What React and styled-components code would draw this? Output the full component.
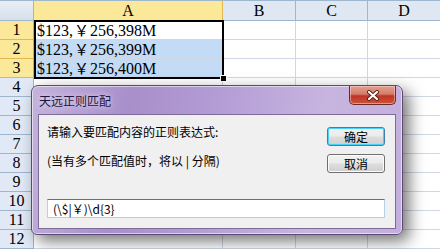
import React from 'react';
import styled, { createGlobalStyle } from 'styled-components';

const GlobalStyle = createGlobalStyle`
	html, body {
		margin: 0;
		padding: 0;
		background: #fff;
		overflow: hidden;
	}
`;

const Page = styled.div`
	position: relative;
	width: 440px;
	height: 249px;
	overflow: hidden;
	background: #fff;
`;

const Sheet = styled.div`
	display: grid;
	grid-template-columns: 34px 189px 73px 72px 73px;
	grid-template-rows: 21px repeat(12, 19px);
	font-family: 'Liberation Serif', 'Noto Sans CJK SC', serif;
`;

const Corner = styled.div`
	background: linear-gradient(#e9eef5, #d6e0ec);
	border-top: 1px solid #9eb6ce;
	border-right: 1px solid #9eb6ce;
	border-bottom: 1px solid #9eb6ce;
	box-sizing: border-box;
`;

const ColHead = styled.div`
	display: flex;
	align-items: center;
	justify-content: center;
	box-sizing: border-box;
	border-top: 1px solid #9eb6ce;
	border-right: 1px solid ${(p) => (p.$active ? '#e2b94f' : '#9eb6ce')};
	border-bottom: 1px solid ${(p) => (p.$active ? '#d9a93a' : '#9eb6ce')};
	background: ${(p) => (p.$active ? '#fbe898' : '#dfe7f2')};
	font-size: 16px;
	color: #000;
	padding-top: 1px;
`;

const RowHead = styled.div`
	display: flex;
	align-items: center;
	justify-content: center;
	box-sizing: border-box;
	border-right: 1px solid ${(p) => (p.$active ? '#d9a93a' : '#9eb6ce')};
	border-bottom: 1px solid ${(p) => (p.$active ? '#e2b94f' : '#9eb6ce')};
	background: ${(p) => (p.$active ? '#fbe898' : '#e0e9f5')};
	font-size: 16px;
	color: #000;
`;

const Cell = styled.div`
	box-sizing: border-box;
	border-right: 1px solid #d0d7e5;
	border-bottom: 1px solid #d0d7e5;
	background: ${(p) => (p.$selected ? '#c3dbf5' : '#fff')};
	font-size: 16px;
	line-height: 18px;
	padding-left: 3px;
	white-space: nowrap;
	color: #000;
`;

const Wide = styled.span`
	font-family: 'Noto Sans CJK SC', sans-serif;
	font-size: 15px;
	margin: 0 1px;
`;

const Selection = styled.div`
	position: absolute;
	left: 34px;
	top: 20px;
	width: 190px;
	height: 59px;
	box-sizing: border-box;
	border: 2px solid #000;
	pointer-events: none;
`;

const FillHandle = styled.div`
	position: absolute;
	left: 220px;
	top: 75px;
	width: 5px;
	height: 5px;
	background: #000;
	border: 1px solid #fff;
`;

const Dialog = styled.div`
	position: absolute;
	left: 31px;
	top: 85px;
	width: 372px;
	height: 150px;
	box-sizing: border-box;
	border: 1px solid #5a4a72;
	border-radius: 7px 7px 6px 6px;
	background: linear-gradient(100deg, #c4b3dc 0%, #a88fcb 25%, #b29ad3 45%, #c7b5e0 75%, #c3afdd 100%);
	box-shadow: 6px 6px 16px rgba(0, 0, 0, 0.55), inset 0 0 0 1px rgba(255, 255, 255, 0.55);
	display: flex;
	flex-direction: column;
	padding: 0 6px 5px 6px;
	font-family: 'Noto Sans CJK SC', sans-serif;
`;

const TitleBar = styled.div`
	height: 28px;
	display: flex;
	align-items: flex-start;
	justify-content: space-between;
`;

const Title = styled.div`
	font-size: 12px;
	color: #1b1540;
	margin-top: 6px;
	padding-left: 1px;
	text-shadow: 0 0 6px rgba(255, 255, 255, 0.9);
`;

const CloseButton = styled.div`
	width: 47px;
	height: 19px;
	box-sizing: border-box;
	border: 1px solid #6b2a26;
	border-top: none;
	border-radius: 0 0 5px 5px;
	background: linear-gradient(#e3a091 0%, #d47c69 45%, #bf3424 55%, #cc543d 100%);
	box-shadow: inset 0 0 0 1px rgba(255, 220, 210, 0.5);
	display: flex;
	align-items: center;
	justify-content: center;
`;

const Client = styled.div`
	flex: 1;
	box-sizing: border-box;
	border: 1px solid #7d6c99;
	background: #f0f0f0;
	display: flex;
	flex-direction: column;
	padding: 9px 10px 10px 8px;
`;

const Top = styled.div`
	flex: 1;
	display: flex;
	justify-content: space-between;
`;

const Texts = styled.div`
	font-size: 12px;
	color: #000;
	line-height: 15px;
`;

const Line = styled.div`
	margin-top: ${(p) => p.$gap || 0}px;
`;

const Buttons = styled.div`
	display: flex;
	flex-direction: column;
	gap: 8px;
	padding-top: 3px;
`;

const Button = styled.div`
	width: 58px;
	height: 19px;
	box-sizing: border-box;
	border: 1px solid ${(p) => (p.$focused ? '#3c7fb1' : '#707070')};
	border-radius: 3px;
	background: linear-gradient(#f2f2f2 0%, #ebebeb 48%, #dddddd 52%, #cfcfcf 100%);
	box-shadow: inset 0 0 0 1px ${(p) => (p.$focused ? '#48d2fb' : '#fcfcfc')};
	font-size: 12px;
	color: #000;
	display: flex;
	align-items: center;
	justify-content: center;
`;

const Input = styled.div`
	height: 19px;
	box-sizing: border-box;
	border: 1px solid #b5cfe7;
	border-top-color: #3d7bad;
	background: #fff;
	font-size: 12px;
	line-height: 17px;
	padding-left: 5px;
	color: #000;
`;

const rows = [
	['$123,', '256,398M'],
	['$123,', '256,399M'],
	['$123,', '256,400M'],
];

const App = () => (
	<Page>
		<GlobalStyle />
		<Sheet>
			<Corner />
			<ColHead $active>A</ColHead>
			<ColHead>B</ColHead>
			<ColHead>C</ColHead>
			<ColHead>D</ColHead>
			{Array.from({ length: 12 }, (_, i) => (
				<React.Fragment key={i}>
					<RowHead $active={i < 3}>{i + 1}</RowHead>
					<Cell $selected={i === 1 || i === 2}>
						{rows[i] && (
							<>
								{rows[i][0]}
								<Wide>￥</Wide>
								{rows[i][1]}
							</>
						)}
					</Cell>
					<Cell />
					<Cell />
					<Cell />
				</React.Fragment>
			))}
		</Sheet>
		<Selection />
		<FillHandle />

		<Dialog>
			<TitleBar>
				<Title>天远正则匹配</Title>
				<CloseButton>
					<svg width="14" height="11" viewBox="0 0 14 11">
						<path d="M3 2 L11 9 M11 2 L3 9" stroke="#5a1a14" strokeWidth="4" strokeLinecap="round" />
						<path d="M3 2 L11 9 M11 2 L3 9" stroke="#fff" strokeWidth="2.2" strokeLinecap="round" />
					</svg>
				</CloseButton>
			</TitleBar>
			<Client>
				<Top>
					<Texts>
						<Line>请输入要匹配内容的正则表达式:</Line>
						<Line $gap={14}>(当有多个匹配值时，将以 | 分隔)</Line>
					</Texts>
					<Buttons>
						<Button $focused>确定</Button>
						<Button>取消</Button>
					</Buttons>
				</Top>
				<Input>(\$|￥)\d{'{'}3{'}'}</Input>
			</Client>
		</Dialog>
	</Page>
);

export default App;
